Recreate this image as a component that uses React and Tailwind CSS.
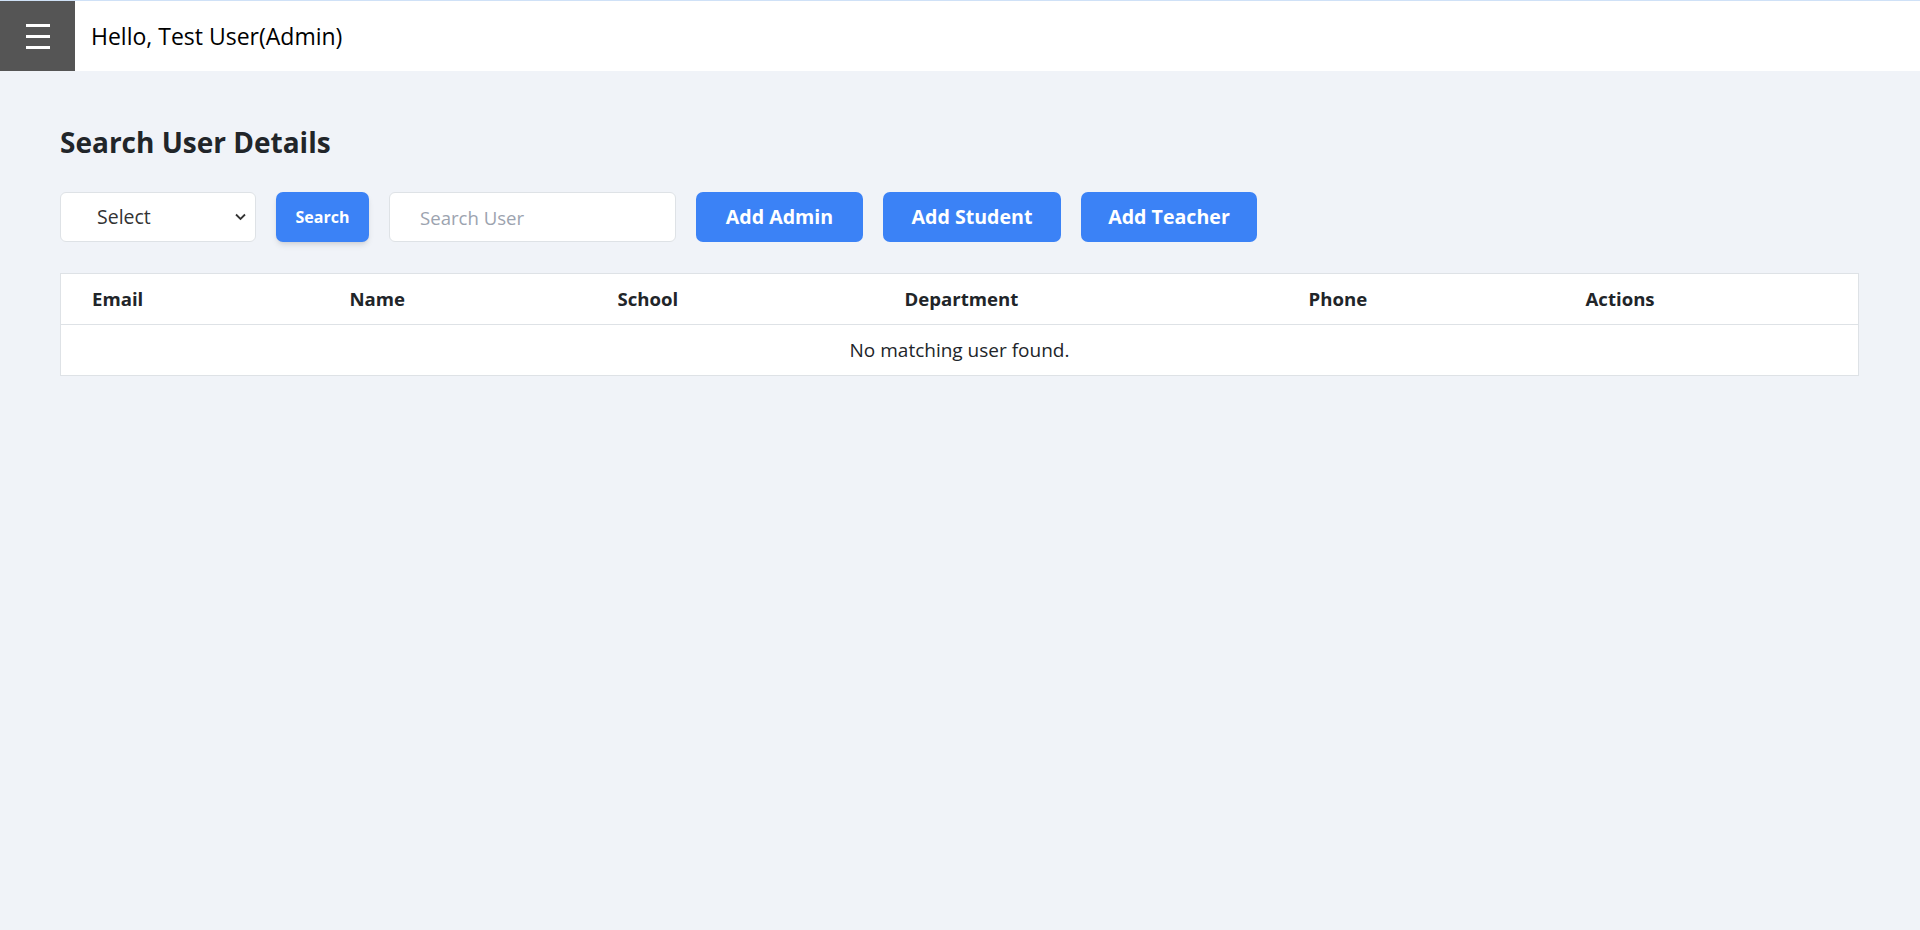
export default function App() {
  const columns = [
    { label: "Email", width: "w-[258px]" },
    { label: "Name", width: "w-[268px]" },
    { label: "School", width: "w-[287px]" },
    { label: "Department", width: "w-[404px]" },
    { label: "Phone", width: "w-[277px]" },
    { label: "Actions", width: "" },
  ];

  return (
    <div className="w-screen bg-[#f0f3f8] font-['Open_Sans',sans-serif] text-[#212529]">
      {/* Top bar */}
      <header className="h-[71px] bg-white border-t border-[#cfe1f7] flex items-center">
        <button className="w-[75px] h-full bg-[#555555] flex flex-col items-center justify-center gap-[8px]">
          <span className="block w-[24px] h-[3px] bg-white"></span>
          <span className="block w-[24px] h-[3px] bg-white"></span>
          <span className="block w-[24px] h-[3px] bg-white"></span>
        </button>
        <h1 className="ml-[16px] text-[23px] text-black">Hello, Test User(Admin)</h1>
      </header>

      {/* Main */}
      <main className="min-h-screen pl-[60px] pr-[60px] pt-[53px]">
        <h2 className="text-[28px] font-bold leading-[36px] text-[#212529]">Search User Details</h2>

        <div className="mt-[32px] flex items-center gap-[20px]">
          <div className="relative w-[196px] h-[50px] bg-white border border-[#dee2e6] rounded-[6px] flex items-center">
            <span className="pl-[36px] text-[19.5px] text-[#333]">Select</span>
            <svg className="absolute right-[9px] top-[20px]" width="11" height="8" viewBox="0 0 11 8">
              <path d="M1 1.5 L5.5 6 L10 1.5" fill="none" stroke="#333" strokeWidth="1.8" />
            </svg>
          </div>
          <button className="w-[93px] h-[50px] bg-[#3b82f6] text-white text-[16px] font-bold rounded-[7px] shadow-md">
            Search
          </button>
          <input
            type="text"
            placeholder="Search User"
            className="w-[287px] h-[50px] bg-white border border-[#dee2e6] rounded-[6px] pl-[30px] text-[18.6px] outline-none placeholder:text-[#9ca3af]"
          />
          <button className="w-[167px] h-[50px] bg-[#3b82f6] text-white text-[19.6px] font-bold rounded-[7px]">
            Add Admin
          </button>
          <button className="w-[178px] h-[50px] bg-[#3b82f6] text-white text-[19.6px] font-bold rounded-[7px]">
            Add Student
          </button>
          <button className="w-[176px] h-[50px] bg-[#3b82f6] text-white text-[19.6px] font-bold rounded-[7px]">
            Add Teacher
          </button>
        </div>

        <table className="mt-[31px] w-[1799px] table-fixed bg-white border border-[#dee2e6] border-collapse">
          <thead>
            <tr className="h-[51px] border-b border-[#dee2e6]">
              {columns.map((c) => (
                <th key={c.label} className={`${c.width} pl-[31px] text-left text-[18.6px] font-bold`}>
                  {c.label}
                </th>
              ))}
            </tr>
          </thead>
          <tbody>
            <tr className="h-[51px]">
              <td colSpan={6} className="text-center text-[19px]">
                No matching user found.
              </td>
            </tr>
          </tbody>
        </table>
      </main>
    </div>
  );
}
